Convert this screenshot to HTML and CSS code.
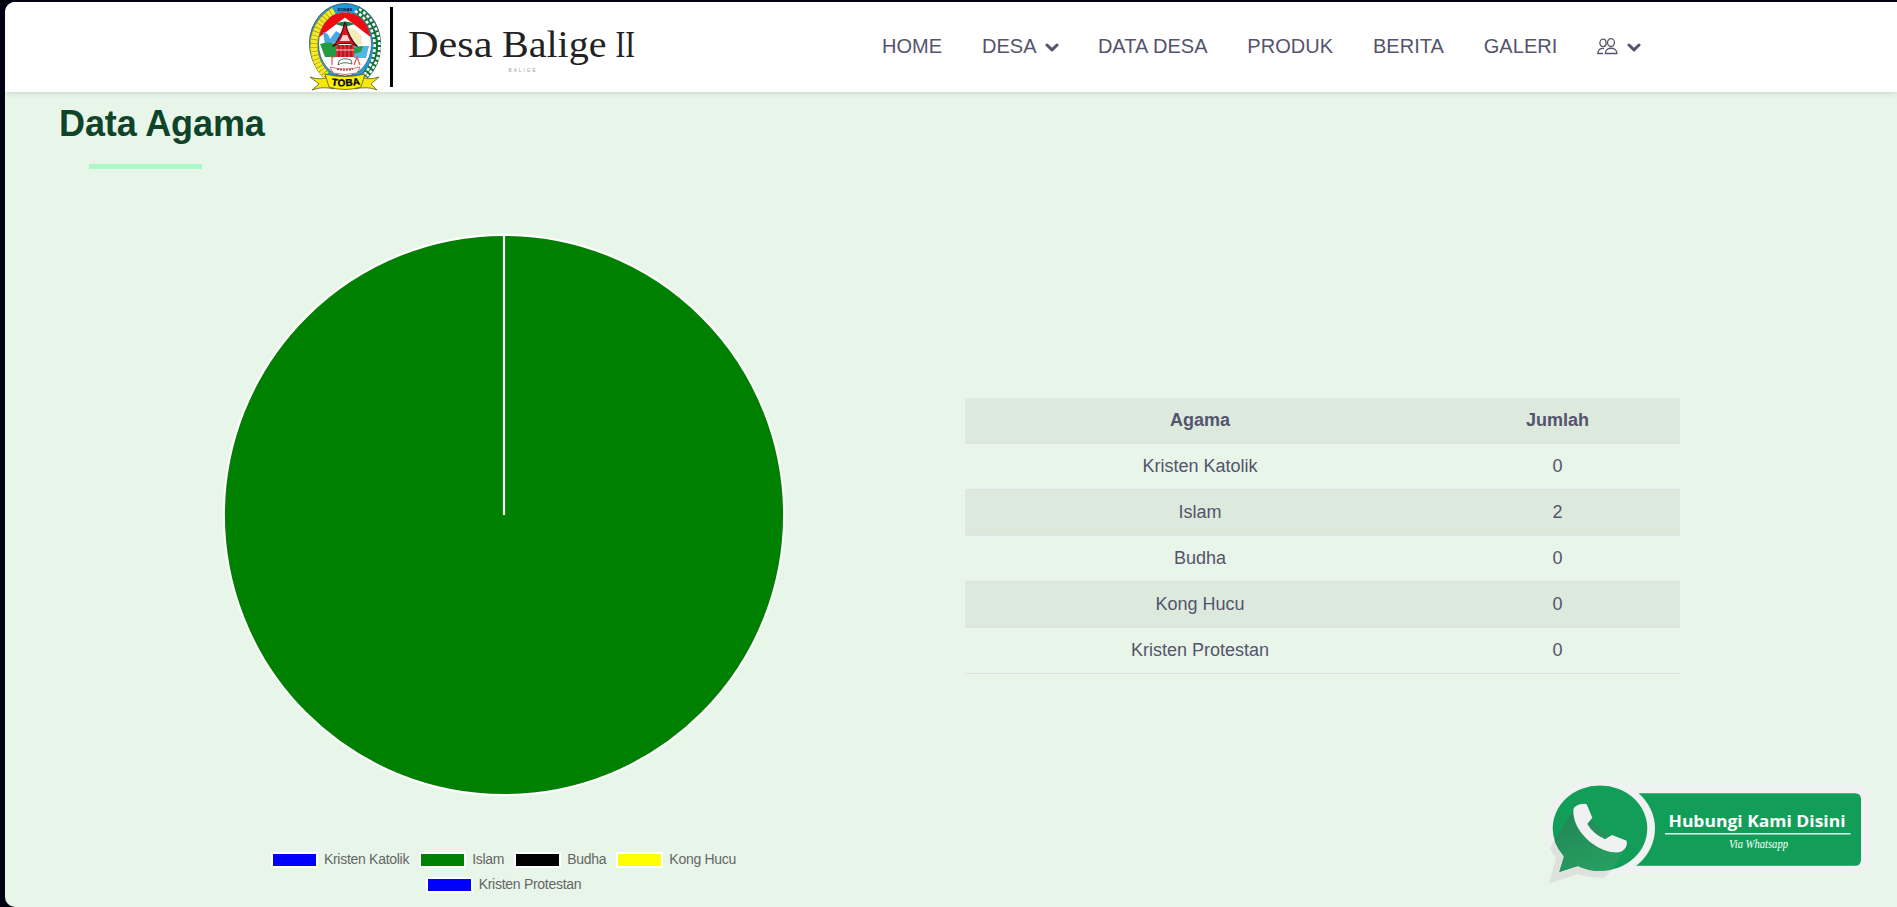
FILE: index.html
```html
<!DOCTYPE html>
<html lang="id">
<head>
<meta charset="utf-8">
<title>Desa Balige II</title>
<link rel="stylesheet" href="styles.css">
</head>
<body>
<div class="page">
  <header class="header">
    <a class="brand">
      <svg class="crest" width="72" height="90" viewBox="0 0 72 90">
        <ellipse cx="36" cy="40.500" rx="35.500" ry="40" fill="#1d9be0" stroke="#3f5f60" stroke-width="1"/>
        <path d="M25 8C2 22 -2 52 17 72" fill="none" stroke="#8a8a20" stroke-width="8"/>
        <path d="M25 8C2 22 -2 52 17 72" fill="none" stroke="#f5ea28" stroke-width="7" stroke-dasharray="3.4 .6"/>
        <path d="M48 7C71 22 75 53 56 73" fill="none" stroke="#15713b" stroke-width="7.500"/>
        <path d="M46 8C69 22 72 53 54 73M50 6C74 22 77 53 58 73" fill="none" stroke="#fff" stroke-width="2.600" stroke-dasharray="3 2"/>
        <ellipse cx="36" cy="41" rx="26.500" ry="32" fill="#fff" stroke="#444" stroke-width=".7"/>
        <path d="M10.500 34C13 18 24 9.500 36 9.500S59 18 61.500 34L36 14.500z" fill="#f00b12"/>
        <path d="M14 29q6 1 7 7l6-8 5 3-4 8-12 3z" fill="#49a7e8"/>
        <path d="M39 25l8 2 6 6v9H43z" fill="#f4edbb"/>
        <path d="M11 41q8-3 16 0v13H16z" fill="#229a3e"/>
        <path d="M45 43h15l-3 12H45z" fill="#57b4df"/><path d="M44 45l10-2-2 6-8 2z" fill="#279b45"/>
        <path d="M26 21q10-5 20 0l-10 3z" fill="#168149"/>
        <path d="M36 19q-4 17-12.500 24.500l7-3h11l7 3Q40 36 36 19z" fill="#df1620" stroke="#4b1119" stroke-width="1.200"/>
        <path d="M34 32h4l3 6H31z" fill="#ffd6d4"/>
        <path d="M27 42h18v12H27z" fill="#e52b35"/>
        <path d="M30 42v12M34 42v12M38 42v12M42 42v12" stroke="#75101b" stroke-width="1"/><path d="M27 47h18" stroke="#fff" stroke-width=".8"/>
        <path d="M29 62q5-4 14-1l-1-4q-8-3-12 1z" fill="#fff" stroke="#444" stroke-width=".8"/>
        <path d="M23 62v-8h3M45 62l3-8 3 8" fill="none" stroke="#ec4c50" stroke-width="1.200"/>
        <path d="M21 64q15 4 30 0l-3 6q-12 3-24 0z" fill="#fff" stroke="#cc5258" stroke-width=".8"/>
        <path d="M28 66q8 2 16 0" fill="none" stroke="#944" stroke-width="1.500" stroke-dasharray="2 1"/>
        <path d="M1 74q12 4 20-1l4 13q-12-3-22 1l7-6zM70 74q-12 4-20-1l-4 13q12-3 22 1l-6-6z" fill="#f4e80e" stroke="#4b4908" stroke-width=".7"/>
        <path d="M16 71q20 5 40 0l-4 13q-16 5-32 0z" fill="#fff000" stroke="#4b4908" stroke-width=".7"/>
        <path id="ribbon-line" d="M19 81.500q17 4 36-1" fill="none"/>
        <text class="crest-name"><textPath href="#ribbon-line" startOffset="50%" text-anchor="middle">TOBA</textPath></text>
        <text x="36" y="7.500" text-anchor="middle" class="crest-top">DOHAS</text>
      </svg>
      <span class="divider"></span>
      <svg class="wordmark" width="240" height="70" viewBox="0 0 240 70">
        <g class="word">
          <text x="1" y="45.300" textLength="84.500" lengthAdjust="spacingAndGlyphs">Desa</text>
          <text x="95" y="45.300" textLength="104.500" lengthAdjust="spacingAndGlyphs">Balige</text>
          <text x="208.500" y="45.300" textLength="19.500" lengthAdjust="spacingAndGlyphs">II</text>
        </g>
        <text x="101.500" y="59.500" textLength="27" class="subword">BALIGE</text>
      </svg>
    </a>
    <nav class="nav">
      <a>HOME</a>
      <a class="dropdown">DESA <svg class="chev" width="14" height="9" viewBox="0 0 14 9"><path d="M2 2l5 4.800L12 2"/></svg></a>
      <a>DATA DESA</a>
      <a>PRODUK</a>
      <a>BERITA</a>
      <a>GALERI</a>
      <a class="account"><svg width="21" height="17" viewBox="0 0 21 17" fill="none" stroke="#54546c" stroke-width="1.300"><ellipse cx="6" cy="4.900" rx="3.100" ry="3.700"/><ellipse cx="14" cy="4.600" rx="3.500" ry="3.900"/><path d="M7 10.300Q1 10 .8 15.500h5.200M8.300 15.500c0-7 11.600-7 11.600 0z"/></svg><svg class="chev" width="14" height="9" viewBox="0 0 14 9"><path d="M2 2l5 4.800L12 2"/></svg></a>
    </nav>
  </header>
  <main class="main">
    <h1 class="title">Data Agama</h1>
    <div class="bar"></div>
    <div class="content">
      <section class="chart">
        <svg class="pie" width="564" height="564" viewBox="0 0 564 564"><circle cx="282" cy="282" r="280.200" fill="green" stroke="#fff" stroke-width="2.200"/><path d="M282 2v280" stroke="#fff" stroke-width="2.200"/></svg>
        <div class="legend">
          <div class="legend-row"><span class="key"><i class="swatch blue"></i>Kristen Katolik</span><span class="key"><i class="swatch green"></i>Islam</span><span class="key"><i class="swatch black"></i>Budha</span><span class="key"><i class="swatch yellow"></i>Kong Hucu</span></div>
          <div class="legend-row"><span class="key"><i class="swatch blue"></i>Kristen Protestan</span></div>
        </div>
      </section>
      <table class="table">
        <tr><th class="name">Agama</th><th>Jumlah</th></tr>
        <tr><td>Kristen Katolik</td><td>0</td></tr>
        <tr><td>Islam</td><td>2</td></tr>
        <tr><td>Budha</td><td>0</td></tr>
        <tr><td>Kong Hucu</td><td>0</td></tr>
        <tr><td>Kristen Protestan</td><td>0</td></tr>
      </table>
    </div>
  </main>
</div>
<a class="whatsapp">
  <svg width="330" height="110" viewBox="0 0 330 110">
    <defs>
      <linearGradient id="shade" x1="0" y1="0" x2=".5" y2="1"><stop offset="0" stop-color="#218353"/><stop offset="1" stop-color="#27a063"/></linearGradient>
      <clipPath id="bubble"><ellipse cx="54" cy="48.300" rx="47.300" ry="42.700"/><path d="M9 62L18 76.700 13.300 92 31.700 86 50 90V60z"/></clipPath>
    </defs>
    <rect x="75" y="5" width="249" height="89" rx="12" fill="#f0f1f1"/>
    <path d="M80 13.300H309q6 0 6 6V79.700q0 6-6 6H80z" fill="#129e59"/>
    <ellipse cx="54" cy="48.500" rx="55" ry="49.500" fill="#f0f1f1"/>
    <path d="M4 69L10 78 3 103.700 32 94q14 4.500 27 3.700L66 89 30 70 8 60z" fill="#dfe1df"/>
    <path d="M14 68L18 76.700 13.300 92 31.700 86Q54 96 75 88" fill="none"/>
    <g clip-path="url(#bubble)">
      <rect width="110" height="100" fill="#129e59"/>
      <path d="M28 30L4 67v35h54L79 69 45 40z" fill="url(#shade)"/>
    </g>
    <path d="M27.300 30Q28 26 34 24.300q5-1 6.700 0l5.600 13.400-5 6.300q6 10 17.700 15.300l7-4.300 14.700 5.700q.8 4-.7 6.300-3 5-9 5.600-13 0-27-10.600-17-14.700-16.700-31.700z" fill="#f0f1f1"/>
    <text x="122.500" y="47.300" textLength="177" lengthAdjust="spacingAndGlyphs" class="wa-main">Hubungi Kami Disini</text>
    <path d="M119 53.800h185.500" stroke="#e4f5eb" stroke-width="1.500"/>
    <text x="183" y="67.500" textLength="59" lengthAdjust="spacingAndGlyphs" class="wa-sub">Via Whatsapp</text>
  </svg>
</a>
</body>
</html>
```
FILE: styles.css
```css
* { box-sizing: border-box; }
body { margin: 0; height: 907px; padding: 2px 0 0 5px; background: #010313; overflow: hidden; font-family: "Liberation Sans", Arial, sans-serif; color: #54546c; }
.page { height: 905px; background: #e8f5e9; border-radius: 10px 0 0 10px; overflow: hidden; }
.header { position: relative; height: 90px; background: #fff; display: flex; align-items: flex-start; padding-left: 304px; box-shadow: 0 1px 6px rgba(0,0,0,.14); }
.brand { display: flex; width: 573px; }
.crest { margin-top: 1px; flex: none; }
.crest-name { font: bold 10px "Liberation Sans", sans-serif; letter-spacing: .4px; stroke: #000; stroke-width: .3px; }
.crest-top { font: bold 4px "Liberation Sans", sans-serif; }
.divider { width: 3px; height: 80px; background: #000; margin: 5px 0 0 9px; flex: none; }
.wordmark { margin: 10px 0 0 14px; }
.word { font: 38px "Liberation Serif", serif; fill: #222; }
.subword { font: 4.5px "Liberation Sans", sans-serif; fill: #999; }
.nav { display: flex; gap: 39.8px; height: 90px; align-items: center; font-size: 20px; letter-spacing: .04px; white-space: nowrap; padding-bottom: 2px; }
.nav a { display: flex; align-items: center; }
.nav .dropdown { margin-right: -1px; }
.chev { margin: 3px 0 0 8.5px; fill: none; stroke: #54546c; stroke-width: 3; stroke-linecap: round; stroke-linejoin: round; }
.main { padding-left: 54px; }
.title { margin: 9px 0 0; font-size: 36px; letter-spacing: -.1px; line-height: 45px; color: #0e4429; }
.bar { width: 113px; height: 5px; background: #abf7c6; margin: 18px 0 0 30px; }
.content { display: flex; align-items: flex-start; }
.chart { width: 890px; padding-top: 64px; display: flex; flex-direction: column; align-items: center; }
.pie { display: block; }
.legend { margin-top: 53px; display: flex; flex-direction: column; color: #666; font-size: 14px; letter-spacing: -.28px; }
.legend-row { display: flex; gap: 10px; justify-content: center; height: 25px; align-items: flex-start; line-height: 18px; padding-right: 1px; }
.key { display: flex; align-items: center; gap: 6px; }
.swatch { width: 47px; height: 16px; border: 2px solid #fff; margin-top: 2px; }
.blue { background: #00f; }
.green { background: green; }
.black { background: #000; }
.yellow { background: #ff0; }
.table { margin: 229px 0 0 16px; width: 715px; border-collapse: separate; border-spacing: 0; font-size: 18px; text-align: center; table-layout: fixed; }
.table th, .table td { height: 46px; padding: 0 0 1px; border-bottom: 1px solid #dee2e6; }
.table .name { width: 470px; }
.table tr:nth-child(odd) { background: #dce9dd; }
.whatsapp { position: absolute; left: 1546px; top: 780px; }
.whatsapp svg { display: block; overflow: visible; }
.wa-main { font: bold 16px "Open Sans", "Noto Sans", sans-serif; fill: #fff; }
.wa-sub { font: italic 12px "Liberation Serif", cursive; fill: #fff; }
```
